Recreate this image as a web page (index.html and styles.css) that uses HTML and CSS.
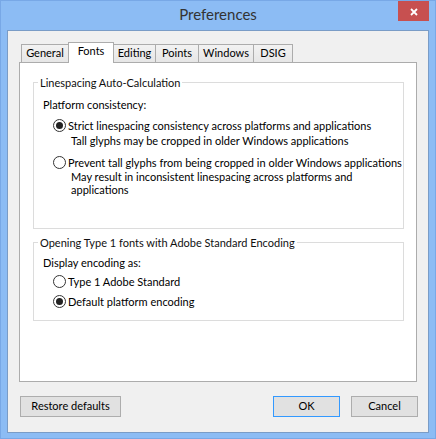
FILE: index.html
```html
<!DOCTYPE html>
<html lang="en">
<head>
<meta charset="utf-8">
<title>Preferences</title>
<link rel="stylesheet" href="styles.css">
</head>
<body>
<div class="window">
  <div class="titlebar">
    <div class="title">Preferences</div>
    <div class="close" aria-label="Close">
      <svg width="8" height="8" viewBox="0 0 8 8"><path d="M1 1 L7 7 M7 1 L1 7" stroke="#fff" stroke-width="1.8" fill="none"/></svg>
    </div>
  </div>
  <div class="client">
    <div class="tabs">
      <div class="tab tab-general">General</div>
      <div class="tab tab-fonts active">Fonts</div>
      <div class="tab tab-editing">Editing</div>
      <div class="tab tab-points">Points</div>
      <div class="tab tab-windows">Windows</div>
      <div class="tab tab-dsig">DSIG</div>
    </div>
    <div class="panel">
      <fieldset class="group group-1">
        <legend>Linespacing Auto-Calculation</legend>
        <div class="field-label">Platform consistency:</div>
        <div class="radio-row row-first"><span class="radio checked"></span><span>Strict linespacing consistency across platforms and applications</span></div>
        <div class="hint">Tall glyphs may be cropped in older Windows applications</div>
        <div class="radio-row row-second"><span class="radio"></span><span>Prevent tall glyphs from being cropped in older Windows applications</span></div>
        <div class="hint hint-multi">May result in inconsistent linespacing across platforms and<br>applications</div>
      </fieldset>
      <fieldset class="group group-2">
        <legend>Opening Type 1 fonts with Adobe Standard Encoding</legend>
        <div class="field-label label-2">Display encoding as:</div>
        <div class="radio-row row-a"><span class="radio"></span><span>Type 1 Adobe Standard</span></div>
        <div class="radio-row row-b"><span class="radio checked"></span><span>Default platform encoding</span></div>
      </fieldset>
    </div>
    <div class="buttons">
      <button class="btn btn-restore">Restore defaults</button>
      <button class="btn btn-ok">OK</button>
      <button class="btn btn-cancel">Cancel</button>
    </div>
  </div>
</div>
</body>
</html>
```
FILE: styles.css
```css
* { box-sizing: border-box; }
html, body { margin: 0; padding: 0; }
body {
  width: 436px;
  height: 439px;
  overflow: hidden;
  background: #8cbcf4;
  font-family: "Lato", "Segoe UI", sans-serif;
  font-size: 11px;
  color: #000;
}
.window {
  width: 436px;
  height: 439px;
  border: 1px solid #78a8e6;
  background: #8cbcf4;
  display: flex;
  flex-direction: column;
}
.titlebar {
  height: 29px;
  flex-shrink: 0;
  display: grid;
  grid-template-columns: 1fr auto 1fr;
}
.title {
  grid-column: 2;
  font-size: 15px;
  line-height: 27px;
  color: #333;
  white-space: nowrap;
}
.close {
  grid-column: 3;
  justify-self: end;
  align-self: start;
  width: 31px;
  height: 20px;
  margin-right: 6px;
  background: #c75050;
  display: flex;
  align-items: center;
  justify-content: center;
  padding-top: 1px;
}
.close svg { display: block; }
.client {
  flex: 1;
  margin: 0 6px 5px;
  border: 1px solid #7a9cc6;
  background: #f0f0f0;
  display: flex;
  flex-direction: column;
  padding-top: 11px;
}
.tabs {
  display: flex;
  align-items: flex-end;
  height: 20px;
  margin-left: 13px;
}
.tab {
  height: 18px;
  border: 1px solid #acacac;
  border-bottom: 0;
  margin-left: -1px;
  background: linear-gradient(#f2f2f2, #e6e6e6);
  text-align: center;
  line-height: 16px;
  white-space: nowrap;
}
.tab:first-child { margin-left: 0; }
.tab.active {
  height: 21px;
  margin-bottom: -1px;
  background: #fff;
  position: relative;
  z-index: 1;
}
.tab-general { width: 48px; }
.tab-fonts { width: 46px; }
.tab-editing { width: 43px; }
.tab-points { width: 44px; }
.tab-windows { width: 56px; }
.tab-dsig { width: 40px; }
.panel {
  height: 320px;
  flex-shrink: 0;
  margin: 0 11px;
  background: #fff;
  border: 1px solid #acacac;
  padding: 12px 0 0 13px;
}
.group {
  width: 371px;
  margin: 0;
  padding: 0;
  min-width: 0;
  border: 1px solid #dcdcdc;
}
.group legend {
  margin-left: 4px;
  padding: 0 2px;
  line-height: 15px;
  color: #101010;
  white-space: nowrap;
}
.group-1 { height: 154px; }
.group-2 { height: 86px; margin-top: 6px; }
.field-label {
  margin: 7px 0 0 9px;
  line-height: 15px;
  white-space: nowrap;
}
.label-2 { margin-top: 5px; }
.radio-row {
  display: flex;
  align-items: center;
  margin-left: 19px;
  line-height: 15px;
  white-space: nowrap;
}
.row-first { margin-top: 6px; }
.row-second { margin-top: 7px; }
.row-a { margin-top: 4px; }
.row-b { margin-top: 5px; }
.radio {
  flex-shrink: 0;
  width: 13px;
  height: 13px;
  margin-right: 2px;
  border: 1px solid #333;
  border-radius: 50%;
  background: #fff;
  display: flex;
  align-items: center;
  justify-content: center;
}
.radio.checked::after {
  content: "";
  width: 7px;
  height: 7px;
  border-radius: 50%;
  background: #222;
}
.hint {
  margin-left: 37px;
  line-height: 15px;
  white-space: nowrap;
}
.hint-multi { line-height: 13px; }
.buttons {
  display: flex;
  gap: 11px;
  margin-top: 14px;
  padding: 0 10px 0 12px;
}
.btn {
  height: 21px;
  padding: 0 0 2px;
  border: 1px solid #adadad;
  border-radius: 0;
  background: #e1e1e1;
  font: inherit;
  line-height: 17px;
  color: #000;
}
.btn-restore { width: 101px; margin-right: auto; }
.btn-ok, .btn-cancel { width: 67px; }
.btn-ok { border-color: #3399ff; }
```
